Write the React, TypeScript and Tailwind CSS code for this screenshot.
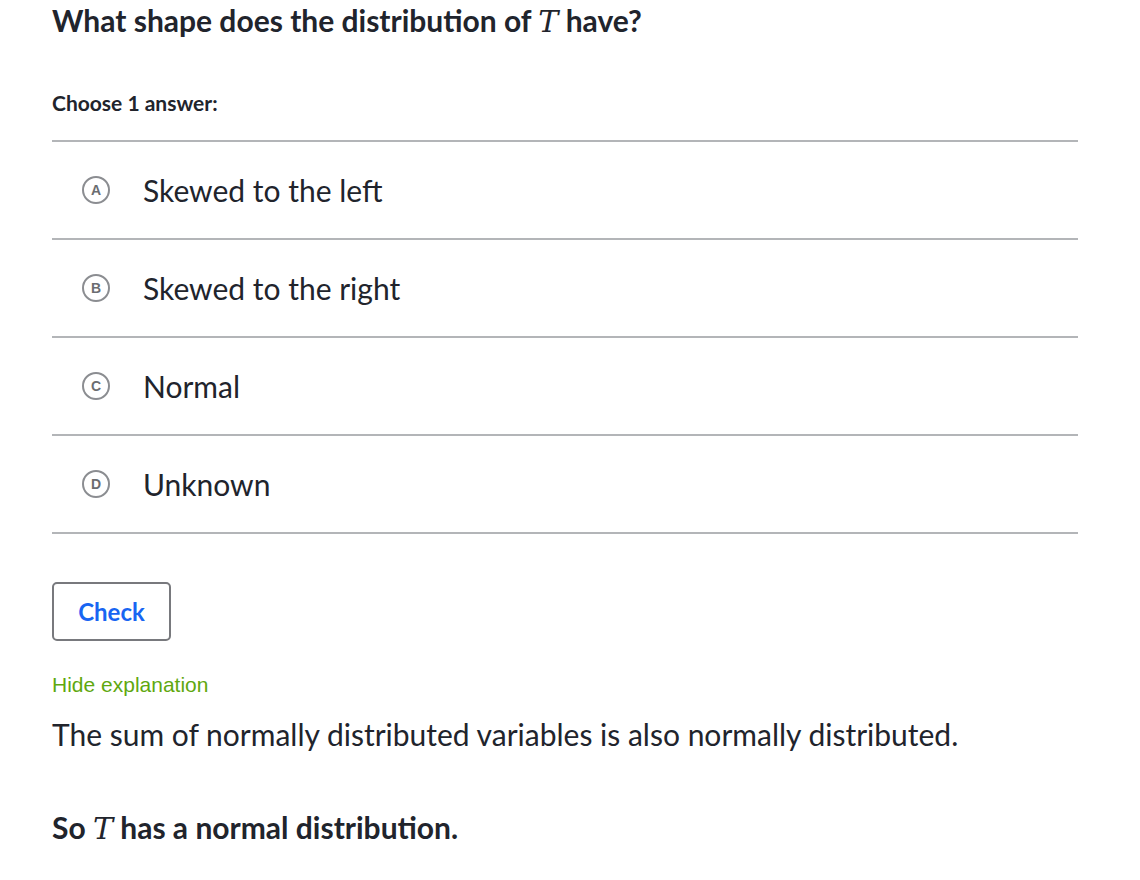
import React from "react";

const T = () => (
  <span style={{ fontFamily: "'DejaVu Serif', 'Liberation Serif', serif" }} className="italic font-normal">
    T
  </span>
);

const options = [
  { l: "A", t: "Skewed to the left" },
  { l: "B", t: "Skewed to the right" },
  { l: "C", t: "Normal" },
  { l: "D", t: "Unknown" },
];

export default function App() {
  return (
    <div
      className="w-[1140px] h-[880px] bg-white text-[#21242c] pl-[52px] pr-[62px]"
      style={{ fontFamily: "Lato, 'Noto Sans', sans-serif" }}
    >
      <h1 className="-mt-[2px] text-[30px] font-bold leading-[44px]">
        What shape does the distribution of <T /> have?
      </h1>
      <div className="mt-[47px] text-[21px] font-bold leading-[24px]">Choose 1 answer:</div>
      <div className="mt-[25px] border-t-2 border-[#b3b5b8]">
        {options.map((o) => (
          <div key={o.l} className="h-[98px] border-b-2 border-[#b3b5b8] flex items-center pl-[30px]">
            <div
              className="w-[28px] h-[28px] rounded-full border-2 border-[#8b8d91] flex items-center justify-center text-[14px] font-bold text-[#6b6d71] shrink-0"
              style={{ fontFamily: "'Liberation Sans', Arial, sans-serif" }}
            >
              {o.l}
            </div>
            <div className="ml-[33px] text-[30px] leading-[36px]">{o.t}</div>
          </div>
        ))}
      </div>
      <button className="mt-[48px] w-[119px] h-[59px] border-2 border-[#78797d] rounded-[5px] text-[#1865f2] text-[24px] font-bold bg-white">
        Check
      </button>
      <div
        className="mt-[30px] text-[21px] text-[#5fa80f] leading-[28px]"
        style={{ fontFamily: "'Liberation Sans', Arial, sans-serif" }}
      >
        Hide explanation
      </div>
      <p className="mt-[13px] text-[30px] leading-[44px]">
        The sum of normally distributed variables is also normally distributed.
      </p>
      <p className="mt-[49px] text-[30px] leading-[44px] font-bold">
        So <T /> has a normal distribution.
      </p>
    </div>
  );
}
